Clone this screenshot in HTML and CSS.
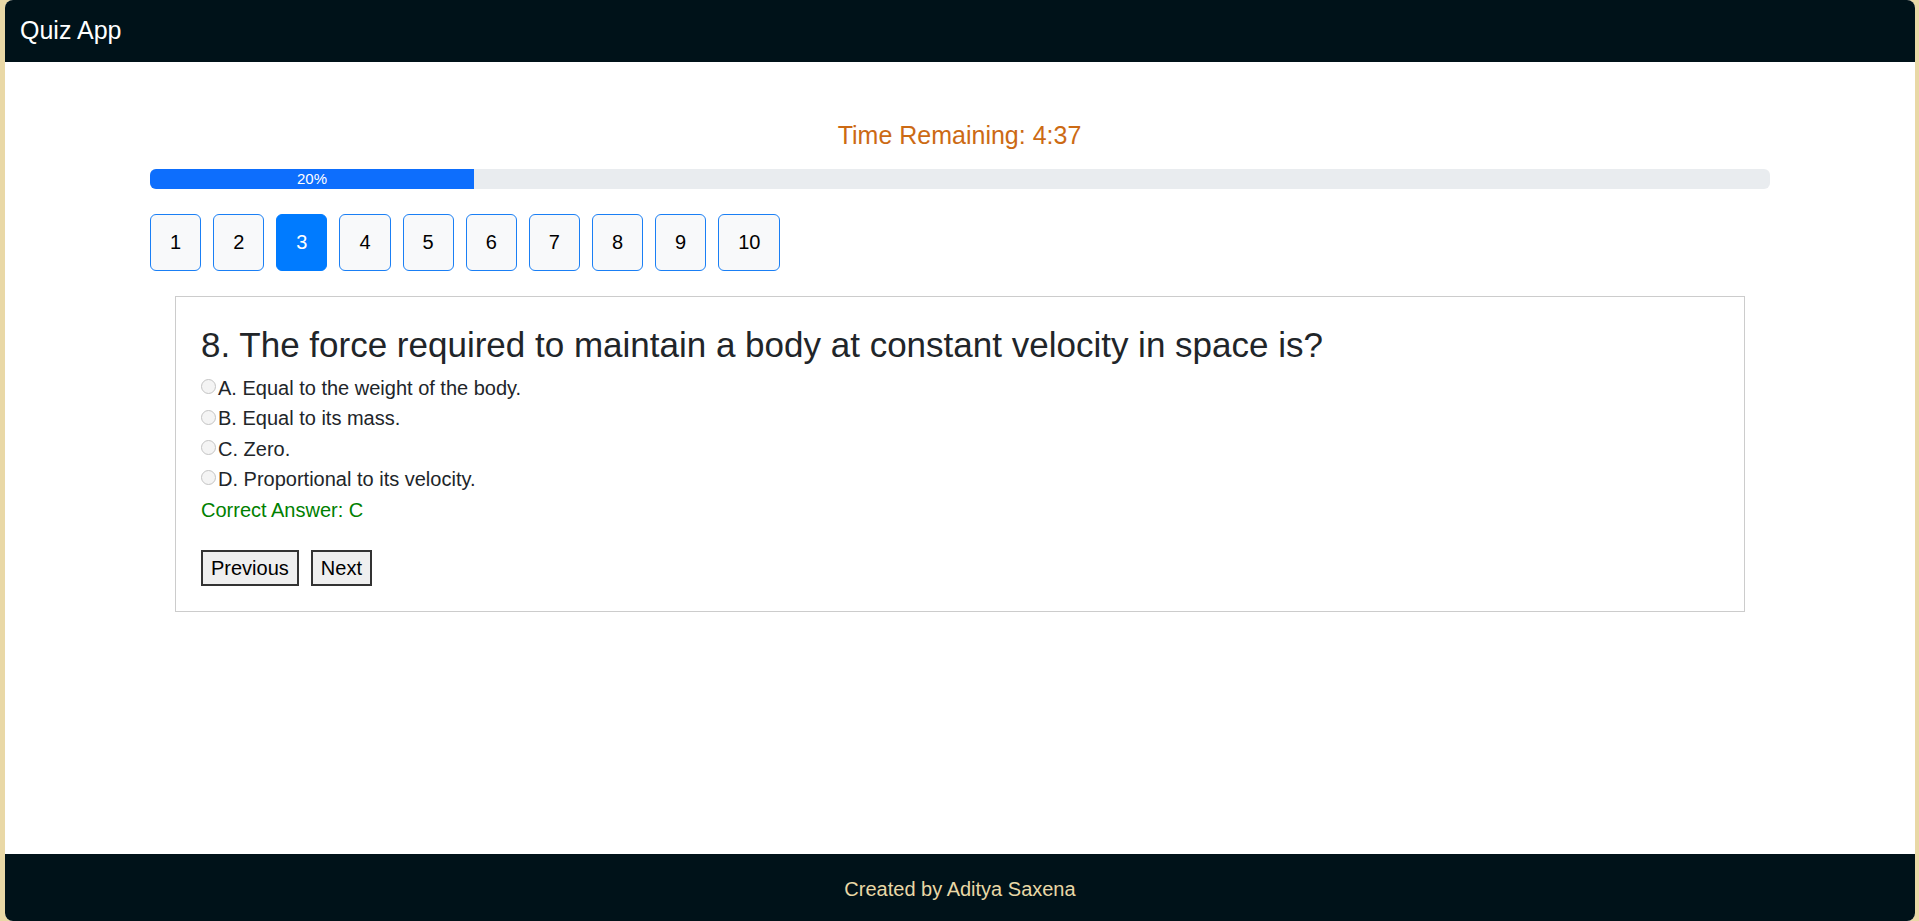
FILE: index.html
```html
<!DOCTYPE html>
<html lang="en">
<head>
<meta charset="utf-8">
<title>Quiz App</title>
<link rel="stylesheet" href="styles.css">
</head>
<body>
<div class="app">
  <header class="navbar">
    <span class="brand">Quiz App</span>
  </header>
  <main class="main">
    <div class="container">
      <div class="timer">Time Remaining: 4:37</div>
      <div class="progress">
        <div class="progress-fill" style="width: 20%">20%</div>
      </div>
      <div class="qnav">
        <button class="qbtn">1</button>
        <button class="qbtn">2</button>
        <button class="qbtn active">3</button>
        <button class="qbtn">4</button>
        <button class="qbtn">5</button>
        <button class="qbtn">6</button>
        <button class="qbtn">7</button>
        <button class="qbtn">8</button>
        <button class="qbtn">9</button>
        <button class="qbtn">10</button>
      </div>
      <div class="card">
        <h3 class="question">8. The force required to maintain a body at constant velocity in space is?</h3>
        <label class="option"><input type="radio" name="q8" class="radio">A. Equal to the weight of the body.</label>
        <label class="option"><input type="radio" name="q8" class="radio">B. Equal to its mass.</label>
        <label class="option"><input type="radio" name="q8" class="radio">C. Zero.</label>
        <label class="option"><input type="radio" name="q8" class="radio">D. Proportional to its velocity.</label>
        <div class="answer">Correct Answer: C</div>
        <div class="actions">
          <button class="action">Previous</button>
          <button class="action">Next</button>
        </div>
      </div>
    </div>
  </main>
  <footer class="footer">Created by Aditya Saxena</footer>
</div>
</body>
</html>
```

FILE: styles.css
```css
* { box-sizing: border-box; }

html, body {
  height: 100%;
}

body {
  margin: 0;
  padding: 0 4px 0 5px;
  background: #e9d8a6;
  font-family: "Liberation Sans", Arial, sans-serif;
  color: #212529;
}

.app {
  height: 921px;
  display: flex;
  flex-direction: column;
  background: #ffffff;
  border-radius: 8px;
  overflow: hidden;
}

.navbar {
  height: 62px;
  flex: 0 0 62px;
  background: #001219;
  display: flex;
  align-items: center;
  padding: 0 15px;
}

.brand {
  color: #ffffff;
  font-size: 25px;
  line-height: 1.5;
}

.main {
  flex: 1;
}

.container {
  width: 1620px;
  margin: 0 auto;
  padding-top: 55px;
}

.timer {
  text-align: center;
  color: #cc6a14;
  font-size: 25px;
  line-height: 36px;
  margin-right: 1px;
}

.progress {
  margin-top: 16px;
  height: 20px;
  background: #e9ecef;
  border-radius: 6px;
  overflow: hidden;
  display: flex;
}

.progress-fill {
  background: #0d6efd;
  color: #ffffff;
  font-size: 15px;
  line-height: 20px;
  text-align: center;
}

.qnav {
  display: flex;
  gap: 12px;
  margin-top: 25px;
}

.qbtn {
  font-family: "Liberation Sans", Arial, sans-serif;
  font-size: 20px;
  line-height: 23px;
  padding: 16px 19px;
  background: #f8f9fa;
  color: #000000;
  border: 1px solid #1a7ff5;
  border-radius: 6px;
}

.qbtn.active {
  background: #007bff;
  border-color: #007bff;
  color: #ffffff;
}

.card {
  margin: 25px 25px 0;
  border: 1px solid #cccccc;
  padding: 27px 25px 25px;
}

.question {
  margin: 0 0 7px;
  font-size: 35px;
  font-weight: 400;
  line-height: 42px;
}

.option {
  display: flex;
  align-items: center;
  font-size: 20px;
  line-height: 30.4px;
}

.radio {
  appearance: none;
  -webkit-appearance: none;
  width: 15px;
  height: 15px;
  margin: 0 2px 3px 0;
  border: 1px solid #c4c4c4;
  border-radius: 50%;
  background: #f4f4f4;
}

.answer {
  color: #008000;
  font-size: 20px;
  line-height: 30.4px;
}

.actions {
  display: flex;
  gap: 12px;
  margin-top: 25px;
}

.action {
  font-family: "Liberation Sans", Arial, sans-serif;
  font-size: 20px;
  line-height: 24px;
  padding: 4px 8px;
  background: #efefef;
  color: #000000;
  border: 2px solid #333333;
  border-radius: 0;
}

.footer {
  flex: 0 0 67px;
  background: #001219;
  color: #e9d8a6;
  font-size: 20px;
  display: flex;
  align-items: center;
  justify-content: center;
  padding-top: 4px;
}
```
